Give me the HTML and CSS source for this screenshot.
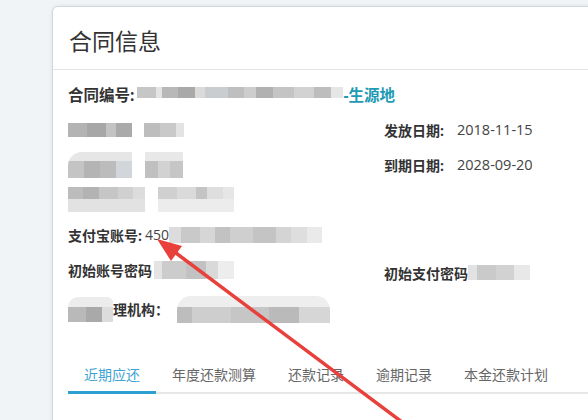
FILE: index.html
```html
<!DOCTYPE html>
<html lang="zh">
<head>
  <meta charset="UTF-8" />
  <title>合同信息</title>
  <link rel="stylesheet" href="styles.css">
</head>
<body>
  <div class="page">
    <div class="card">
      <div class="card-head">合同信息</div>
      <div class="card-body">
        <div class="row-first">
          <span class="label big">合同编号:</span>
          <span class="mosaic m-contract"></span>
          <span class="teal">-生源地</span>
        </div>

        <div class="info-grid">
          <div class="cell">
            <span class="mosaic m-r2a"></span>
            <span class="mosaic m-r2b"></span>
          </div>
          <div class="cell"><span class="label">发放日期:</span><span class="value">2018-11-15</span></div>

          <div class="cell">
            <span class="mosaic m-r3a"></span>
            <span class="mosaic m-r3b"></span>
          </div>
          <div class="cell"><span class="label">到期日期:</span><span class="value">2028-09-20</span></div>

          <div class="cell">
            <span class="mosaic m-r4a"></span>
            <span class="mosaic m-r4b"></span>
          </div>
          <div class="cell"></div>

          <div class="cell"><span class="label">支付宝账号:</span><span class="value num">450</span><span class="mosaic m-alipay"></span></div>
          <div class="cell"></div>

          <div class="cell"><span class="label">初始账号密码</span><span class="mosaic m-pwd"></span></div>
          <div class="cell low"><span class="label">初始支付密码</span><span class="mosaic m-paypwd"></span></div>

          <div class="cell last"><span class="mosaic m-orga"></span><span class="label">理机构：</span><span class="mosaic m-orgb"></span></div>
          <div class="cell last"></div>
        </div>

        <div class="tabs">
          <div class="tab active">近期应还</div>
          <div class="tab">年度还款测算</div>
          <div class="tab">还款记录</div>
          <div class="tab">逾期记录</div>
          <div class="tab">本金还款计划</div>
        </div>
      </div>
    </div>
  </div>

  <svg class="arrow" width="588" height="420" viewBox="0 0 588 420">
    <line x1="176" y1="253" x2="402" y2="422" stroke="#e8403a" stroke-width="3.5" stroke-linecap="round"/>
    <polygon points="157,239 171,261 182,246" fill="#e8403a"/>
  </svg>
</body>
</html>
```

FILE: styles.css
```css
* { margin: 0; padding: 0; box-sizing: border-box; }
body {
  font-family: 'Open Sans', 'Noto Sans CJK SC', sans-serif;
  background: #f1f4f7;
  overflow: hidden;
  width: 588px;
  height: 420px;
  position: relative;
}
.page {
  padding: 6px 0 0 52px;
}
.card {
  width: 580px;
  height: 440px;
  background: #fff;
  border: 1px solid #d3d7db;
  border-radius: 6px;
  box-shadow: 0 0 4px rgba(0, 0, 0, 0.08);
}
.card-head {
  height: 63px;
  padding: 4px 0 0 16px;
  display: flex;
  align-items: center;
  font-size: 23px;
  color: #333;
  border-bottom: 1px solid #e3e3e3;
}
.card-body {
  padding: 7px 0 0 15px;
}
.row-first {
  height: 35px;
  display: flex;
  align-items: center;
}
.label {
  font-weight: bold;
  font-size: 14px;
  color: #333;
}
.label.big { font-size: 15.5px; }
.value {
  font-size: 14.5px;
  color: #444;
  margin-left: 13px;
}
.value.num { margin-left: 3px; font-size: 14px; }
.teal {
  color: #1f9ab4;
  font-weight: bold;
  font-size: 15.5px;
}
.info-grid {
  display: grid;
  grid-template-columns: 316px 1fr;
  grid-auto-rows: 35px;
}
.cell {
  display: flex;
  align-items: center;
}
.cell.low { padding-top: 6px; }
.cell.last { padding-top: 9px; }

/* pixelated blur blocks */
.mosaic {
  display: inline-block;
  height: 16px;
  filter: blur(0.7px);
}
.m-contract {
  width: 206px;
  margin-left: 3px;
  background:
    linear-gradient(90deg, #c6c6c6 0 9%, #e4e4e4 9% 12%, #b8b8b8 12% 20%, #a9a9a9 20% 28%, #dadada 28% 33%,
      #c9cdd0 33% 44%, #bfbfbf 44% 52%, #cdcdcd 52% 58%, #b1b1b1 58% 66%, #c4c4c4 66% 76%, #d2d2d2 76% 86%, #bdbdbd 86% 94%, #e6e6e6 94% 100%);
  background-size: 100% 70%;
  background-repeat: no-repeat;
}
.m-r2a {
  width: 64px;
  height: 14px;
  background: linear-gradient(90deg, #b3b3b3 0 30%, #a7a7a7 30% 60%, #c3c3c3 60% 75%, #aaaaaa 75% 100%);
}
.m-r2b {
  width: 40px;
  height: 14px;
  margin-left: 12px;
  background: linear-gradient(90deg, #bdbdbd 0 40%, #c9c9c9 40% 80%, #e3e3e3 80% 100%);
}
.m-r3a {
  width: 64px;
  height: 26px;
  border-radius: 14px 0 0 0;
  background:
    linear-gradient(#e6e6e6 0 35%, transparent 35%),
    linear-gradient(90deg, #c4c4c4 0 25%, #b4b4b4 25% 50%, #bcbcbc 50% 75%, #d2d6da 75% 100%);
}
.m-r3b {
  width: 38px;
  height: 26px;
  margin-left: 13px;
  background:
    linear-gradient(#e8e8e8 0 35%, transparent 35%),
    linear-gradient(90deg, #c0c0c0 0 35%, #d2d2d2 35% 65%, #c6c6c6 65% 100%);
}
.m-r4a {
  width: 77px;
  height: 25px;
  background:
    linear-gradient(transparent 0 50%, #e2e2e2 50% 100%),
    linear-gradient(90deg, #bcbcbc 0 20%, #b3b3b3 20% 40%, #c6c6c6 40% 65%, #d0d0d0 65% 85%, #dcdcdc 85% 100%);
}
.m-r4b {
  width: 76px;
  height: 25px;
  margin-left: 13px;
  background:
    linear-gradient(transparent 0 50%, #ececec 50% 100%),
    linear-gradient(90deg, #d0d0d0 0 25%, #dadada 25% 50%, #c4c4c4 50% 65%, #dedede 65% 85%, #e6e6e6 85% 100%);
}
.m-alipay {
  width: 153px;
  height: 16px;
  background: linear-gradient(90deg, #dcdcdc 0 8%, #c9c9c9 8% 20%, #d6d6d6 20% 30%, #c2c2c2 30% 40%, #cfcfcf 40% 55%,
    #c4c4c4 55% 70%, #d4d4d4 70% 80%, #dedede 80% 90%, #eaeaea 90% 100%);
}
.m-pwd {
  width: 80px;
  height: 18px;
  margin-left: 2px;
  background: linear-gradient(90deg, #e4e4e4 0 10%, #cccccc 10% 40%, #c2c2c2 40% 65%, #d9d9d9 65% 80%, #ededed 80% 100%);
}
.m-paypwd {
  width: 62px;
  height: 15px;
  background: linear-gradient(90deg, #e2e2e2 0 15%, #cacaca 15% 45%, #d2d2d2 45% 75%, #e8e8e8 75% 100%);
}
.m-orga {
  width: 45px;
  height: 25px;
  border-radius: 10px 6px 0 0;
  background:
    linear-gradient(#ececec 0 40%, transparent 40%),
    linear-gradient(90deg, #b9b9b9 0 40%, #a9a9a9 40% 75%, #dcdcdc 75% 100%);
}
.m-orgb {
  width: 153px;
  height: 27px;
  margin-left: 8px;
  border-radius: 14px 14px 0 0;
  background:
    linear-gradient(#eeeeee 0 40%, transparent 40%),
    linear-gradient(90deg, #bdbdbd 0 10%, #cecece 10% 35%, #c6c6c6 35% 60%, #bababa 60% 80%, #d6d6d6 80% 100%);
}

.tabs {
  margin-top: 43px;
  display: flex;
  border-bottom: 2px solid #e7e7e7;
}
.tab {
  padding: 0 16px 6px;
  line-height: 20px;
  font-size: 14px;
  color: #666;
  border-bottom: 3px solid transparent;
  margin-bottom: -2px;
}
.tab.active {
  color: #3ea3d2;
  border-bottom-color: #2d9fd0;
}
.arrow {
  position: absolute;
  left: 0;
  top: 0;
}
```
